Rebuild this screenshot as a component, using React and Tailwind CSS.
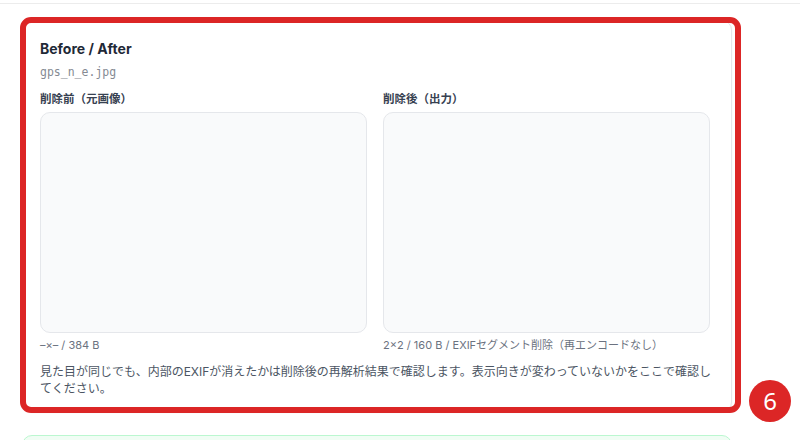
export default function App() {
  const sans = { fontFamily: '"Inter", "Noto Sans CJK JP", sans-serif' };
  return (
    <div className="relative w-[800px] h-[440px] overflow-hidden bg-white" style={sans}>
      <div className="h-[4px] border-b border-[#ececec]" />
      <div className="ml-[22px] mt-[16px] w-[710px] rounded-[10px] border border-[#e5e7eb] bg-white pl-[17px] pr-[21px] pt-[19px] pb-[14px] shadow-[0_1px_2px_rgba(0,0,0,0.05)]">
        <div className="text-[14px] leading-[18px] font-bold text-[#1f2937]">Before / After</div>
        <div className="mt-[6px] text-[11.5px] leading-[16px] text-[#858a93]" style={{ fontFamily: '"DejaVu Sans Mono", monospace' }}>gps_n_e.jpg</div>
        <div className="mt-[11px] grid grid-cols-2 gap-[16px]">
          <div>
            <div className="text-[11.5px] leading-[16px] font-semibold text-[#374151]">削除前（元画像）</div>
            <div className="mt-[5px] h-[221px] rounded-[10px] border border-[#e5e7eb] bg-[#f9fafb]" />
            <div className="mt-[5px] text-[11px] leading-[14px] text-[#6b7280]">–×– / 384 B</div>
          </div>
          <div>
            <div className="text-[11.5px] leading-[16px] font-semibold text-[#374151]">削除後（出力）</div>
            <div className="mt-[5px] h-[221px] rounded-[10px] border border-[#e5e7eb] bg-[#f9fafb]" />
            <div className="mt-[5px] text-[11px] leading-[14px] text-[#6b7280]">2×2 / 160 B / EXIFセグメント削除（再エンコードなし）</div>
          </div>
        </div>
        <div className="mt-[11px] w-[676px] text-[12px] leading-[17px] text-[#4b5563]">
          見た目が同じでも、内部のEXIFが消えたかは削除後の再解析結果で確認します。表示向きが変わっていないかをここで確認してください。
        </div>
      </div>
      <div className="ml-[22px] mt-[23px] w-[710px] h-[40px] rounded-[10px] border border-[#bbf7d0] bg-[#f0fdf4]" />
      <div className="absolute left-[20px] top-[17px] w-[721px] h-[396px] rounded-[11px] border-[6px] border-[#dc2626] pointer-events-none" />
      <div className="absolute left-[749px] top-[380px] w-[42px] h-[42px] rounded-full bg-[#dc2626] flex items-center justify-center text-white text-[24px] leading-none" style={{ fontFamily: '"Noto Sans", sans-serif' }}>6</div>
    </div>
  );
}
